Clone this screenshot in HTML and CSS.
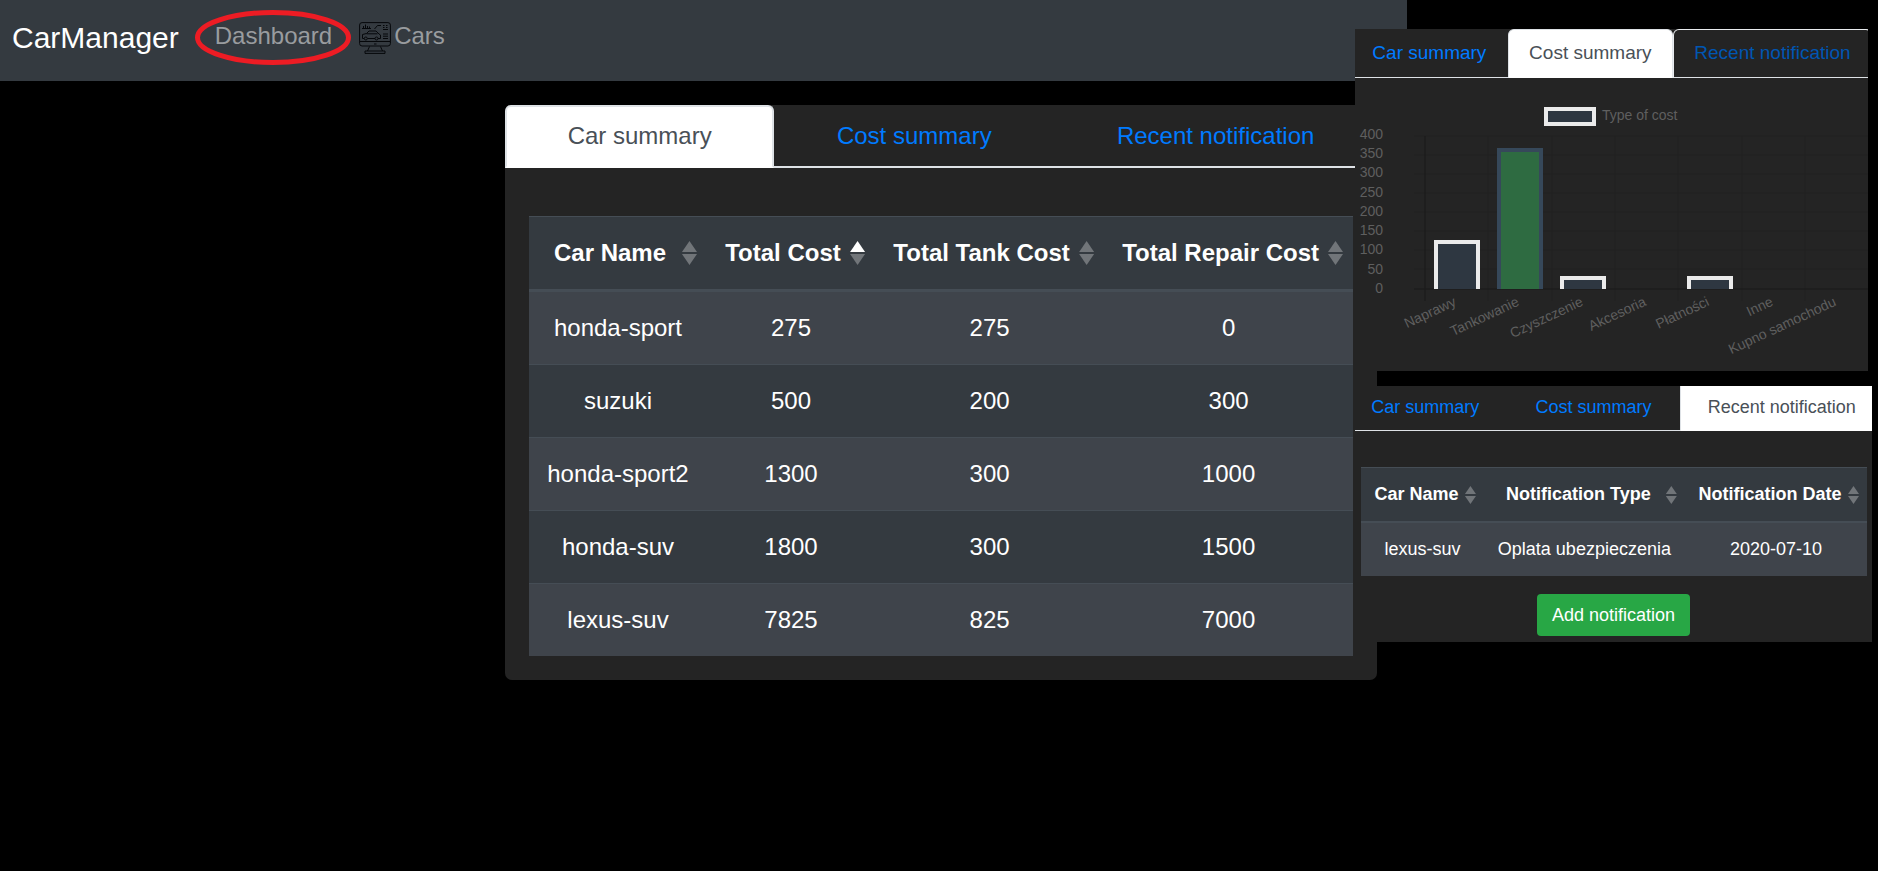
FILE: index.html
```html
<!DOCTYPE html>
<html lang="en">
<head>
<meta charset="utf-8">
<title>CarManager</title>
<link rel="stylesheet" href="styles.css">
</head>
<body>
<div class="page">
  <header class="navbar">
    <a class="brand" href="#">CarManager</a>
    <nav class="nav-links">
      <a class="nav-link marked" href="#">Dashboard
        <svg class="marker" viewBox="0 0 156 55" aria-hidden="true"><ellipse cx="78" cy="27.500" rx="75.500" ry="25" fill="none" stroke="#ed1c24" stroke-width="5"/></svg>
      </a>
      <a class="nav-link" href="#">
        <svg class="car-icon" viewBox="0 0 32 32" fill="none" stroke="#05070a" stroke-width="1" aria-hidden="true">
          <rect x=".6" y=".6" width="30.800" height="23.400" rx="2.500"/>
          <path d="M1 19.500h30M15 22h2.500M10.500 24.500L8.500 29M21.500 24.500l2 4.500M6 29h20v2.400H6z"/>
          <path d="M3 6.500h9M4.500 6V4M6.500 6V2.500M8.500 6V4M10.500 6V4.500"/>
          <path d="M5 16.500H3.500v-4l4-1L10 9h7l3 3 1.500 1v3.500H19M8.500 16.500h7.500M7.500 11.800h11"/>
          <circle cx="6.800" cy="16.500" r="1.500"/><circle cx="17.500" cy="16.500" r="1.500"/>
          <path d="M15.500 7l3-3.500H22M24 3.500h1.500M27 3.500h1.500M24 5.500h1.500M27 5.500h1.500M24 7.500h5M24 12h5M24 14.200h5M24 16.500h5"/>
        </svg>
        Cars</a>
    </nav>
  </header>

  <main class="panel main-panel">
    <nav class="tabs">
      <a class="tab active" href="#">Car summary</a>
      <a class="tab" href="#">Cost summary</a>
      <a class="tab" href="#">Recent notification</a>
    </nav>
    <table class="data-table">
      <colgroup><col class="c-name"><col class="c-cost"><col class="c-tank"><col class="c-repair"></colgroup>
      <thead>
        <tr>
          <th>Car Name<span class="sort"></span></th>
          <th>Total Cost<span class="sort ascending"></span></th>
          <th>Total Tank Cost<span class="sort"></span></th>
          <th>Total Repair Cost<span class="sort"></span></th>
        </tr>
      </thead>
      <tbody>
        <tr><td>honda-sport</td><td>275</td><td>275</td><td>0</td></tr>
        <tr><td>suzuki</td><td>500</td><td>200</td><td>300</td></tr>
        <tr><td>honda-sport2</td><td>1300</td><td>300</td><td>1000</td></tr>
        <tr><td>honda-suv</td><td>1800</td><td>300</td><td>1500</td></tr>
        <tr><td>lexus-suv</td><td>7825</td><td>825</td><td>7000</td></tr>
      </tbody>
    </table>
  </main>
</div>

<aside class="overlay">
  <section class="panel cost-panel">
    <nav class="tabs">
      <a class="tab" href="#">Car summary</a>
      <a class="tab active" href="#">Cost summary</a>
      <a class="tab hovered" href="#">Recent notification</a>
    </nav>
    <svg class="chart" viewBox="1355 78 513 293" role="img" aria-label="Type of cost">
      <g class="grid">
        <path d="M1414 136h454M1414 155h454M1414 174h454M1414 193h454M1414 212h454M1414 231h454M1414 250h454M1414 269h454"/>
        <path d="M1488 136v165M1552 136v165M1615 136v165M1678 136v165M1742 136v165M1805 136v165"/>
      </g>
      <path class="axis" d="M1414 289h454M1425 136v165"/>
      <g class="bars">
        <rect class="fill" x="1434" y="240" width="46" height="49"/>
        <path class="edge" d="M1436 289v-47h42v47"/>
        <rect class="fill-green" x="1497" y="148" width="46" height="141"/>
        <path class="edge-blue" d="M1499 289v-139h42v139"/>
        <rect class="fill" x="1560" y="276" width="46" height="13"/>
        <path class="edge" d="M1562 289v-11h42v11"/>
        <rect class="fill" x="1687" y="276" width="46" height="13"/>
        <path class="edge" d="M1689 289v-11h42v11"/>
        <rect class="fill edge" x="1546" y="109" width="48" height="15"/>
      </g>
      <g class="labels">
        <text x="1602" y="120">Type of cost</text>
        <g text-anchor="end">
          <text x="1383" y="139">400</text>
          <text x="1383" y="158">350</text>
          <text x="1383" y="177">300</text>
          <text x="1383" y="197">250</text>
          <text x="1383" y="216">200</text>
          <text x="1383" y="235">150</text>
          <text x="1383" y="254">100</text>
          <text x="1383" y="274">50</text>
          <text x="1383" y="293">0</text>
          <text transform="translate(1457 305) rotate(-25)">Naprawy</text>
          <text transform="translate(1520 305) rotate(-25)">Tankowanie</text>
          <text transform="translate(1584 305) rotate(-25)">Czyszczenie</text>
          <text transform="translate(1647 305) rotate(-25)">Akcesoria</text>
          <text transform="translate(1710 305) rotate(-25)">Płatności</text>
          <text transform="translate(1774 305) rotate(-25)">Inne</text>
          <text transform="translate(1837 305) rotate(-25)">Kupno samochodu</text>
        </g>
      </g>
    </svg>
  </section>

  <section class="panel notice-panel">
    <nav class="tabs">
      <a class="tab" href="#">Car summary</a>
      <a class="tab" href="#">Cost summary</a>
      <a class="tab active" href="#">Recent notification</a>
    </nav>
    <table class="data-table">
      <colgroup><col class="c-car"><col class="c-type"><col class="c-date"></colgroup>
      <thead>
        <tr>
          <th>Car Name<span class="sort"></span></th>
          <th>Notification Type<span class="sort"></span></th>
          <th>Notification Date<span class="sort"></span></th>
        </tr>
      </thead>
      <tbody>
        <tr><td>lexus-suv</td><td>Oplata ubezpieczenia</td><td>2020-07-10</td></tr>
      </tbody>
    </table>
    <button class="add-button" type="button">Add notification</button>
  </section>
</aside>
</body>
</html>
```
FILE: styles.css
```css
* { box-sizing: border-box; }

body {
  margin: 0;
  background: #000;
  color: #fff;
  font-family: "Liberation Sans", Arial, sans-serif;
  font-size: 24px;
  line-height: 36px;
}

a { text-decoration: none; }

.page { margin-right: 471px; }

/* Navigation bar */
.navbar {
  display: flex;
  align-items: center;
  gap: 36px;
  padding: 12px 12px 18px;
  background: #343a40;
}

.brand {
  color: #fff;
  font-size: 30px;
  line-height: 51px;
}

.nav-links {
  display: flex;
  gap: 27px;
  padding-bottom: 3px;
}

.nav-link {
  position: relative;
  display: flex;
  align-items: center;
  gap: 3px;
  color: #999c9f;
}

.marker {
  position: absolute;
  left: -20px;
  top: -8px;
  width: 156px;
  height: 55px;
}

.car-icon {
  width: 32px;
  height: 32px;
  margin-top: 4px;
}

/* Panels */
.panel { background: #242424; }

.main-panel {
  margin: 24px 30px 0 505px;
  padding-bottom: 24px;
  border-radius: 7px;
}

.overlay {
  position: absolute;
  top: 29px;
  right: 6px;
  width: 517px;
  display: flex;
  flex-direction: column;
  gap: 15px;
}

.cost-panel {
  margin-right: 4px;
  overflow: hidden;
  font-size: 19px;
  line-height: 28px;
}

.notice-panel {
  overflow: hidden;
  padding-bottom: 6px;
  font-size: 18px;
  line-height: 27px;
}

/* Tabs */
.tabs {
  display: flex;
  border-bottom: 2px solid #dee2e6;
}

.tab {
  flex: 1 1 auto;
  margin-bottom: -2px;
  padding: 11px 0 12px;
  border: 2px solid transparent;
  border-radius: 6px 6px 0 0;
  color: #007bff;
  text-align: center;
  white-space: nowrap;
}

.tab.active {
  background: #fff;
  border-color: #dee2e6 #dee2e6 #fff;
  color: #495057;
}

.cost-panel .tabs {
  margin: 0 -4px;
  border-bottom-width: 1px;
}

.cost-panel .tab {
  margin-bottom: -1px;
  padding: 9px 0 10px;
  border-width: 1px;
}

.cost-panel .hovered {
  border-color: #e9ecef #e9ecef #dee2e6;
  color: #0056b3;
}

.notice-panel .tabs {
  margin: 0 -12px;
  border-bottom-width: 1px;
}

.notice-panel .tab {
  margin-bottom: -1px;
  padding: 8px 0 9px;
  border-width: 0 1px 1px;
  border-radius: 0;
}

/* Tables */
.data-table {
  width: calc(100% - 48px);
  margin: 48px 24px 0;
  table-layout: fixed;
  border-collapse: separate;
  border-spacing: 0;
  background: #343a40;
  text-align: center;
  white-space: nowrap;
}

.data-table th {
  position: relative;
  padding: 18px 34px 18px 18px;
  border-top: 1px solid #454d55;
  border-bottom: 3px solid #454d55;
}

.data-table td {
  padding: 18px 0;
  border-top: 1px solid #454d55;
}

.data-table tbody tr:first-child td { border-top: 0; }
.data-table tbody tr:nth-child(odd) { background: #3f444b; }

.c-name { width: 21.6%; }
.c-cost { width: 20.4%; }
.c-tank { width: 27.8%; }
.c-repair { width: 30.2%; }
.c-car { width: 24.3%; }
.c-type { width: 39.7%; }
.c-date { width: 36%; }

.sort {
  position: absolute;
  top: 24px;
  right: 10px;
  display: grid;
  gap: 2px;
}

.sort::before,
.sort::after {
  content: "";
  width: 15px;
  height: 11px;
  background: #717579;
}

.sort::before { clip-path: polygon(50% 0, 100% 100%, 0 100%); }
.sort::after { clip-path: polygon(0 0, 100% 0, 50% 100%); }
.sort.ascending::before { background: #fff; }

.notice-panel .data-table {
  width: calc(100% - 11px);
  margin: 36px 5px 0 6px;
}

.notice-panel th {
  padding: 13px 25px 13px 13px;
  border-bottom-width: 2px;
}

.notice-panel td { padding: 13px 0; }

.notice-panel .sort {
  top: 18px;
  right: 8px;
}

.notice-panel .sort::before,
.notice-panel .sort::after {
  width: 11px;
  height: 8px;
}

.add-button {
  display: block;
  margin: 18px auto 0;
  padding: 8px 15px;
  border: 0;
  border-radius: 4px;
  background: #28a745;
  color: #fff;
  font: inherit;
  line-height: 26px;
}

/* Cost chart */
.chart {
  display: block;
  width: 100%;
}

.grid { stroke: #202020; }
.axis { fill: none; stroke: #1c1c1c; stroke-width: 1.500; }
.grid path { fill: none; }
.fill { fill: #2e3741; }
.fill-green { fill: #2e6b41; }
.edge { stroke: #ebebeb; stroke-width: 4; }
.edge-blue { stroke: #36485a; stroke-width: 4; }
path.edge, path.edge-blue { fill: none; }
.labels { fill: #5f5f5f; font-size: 14px; }
```
